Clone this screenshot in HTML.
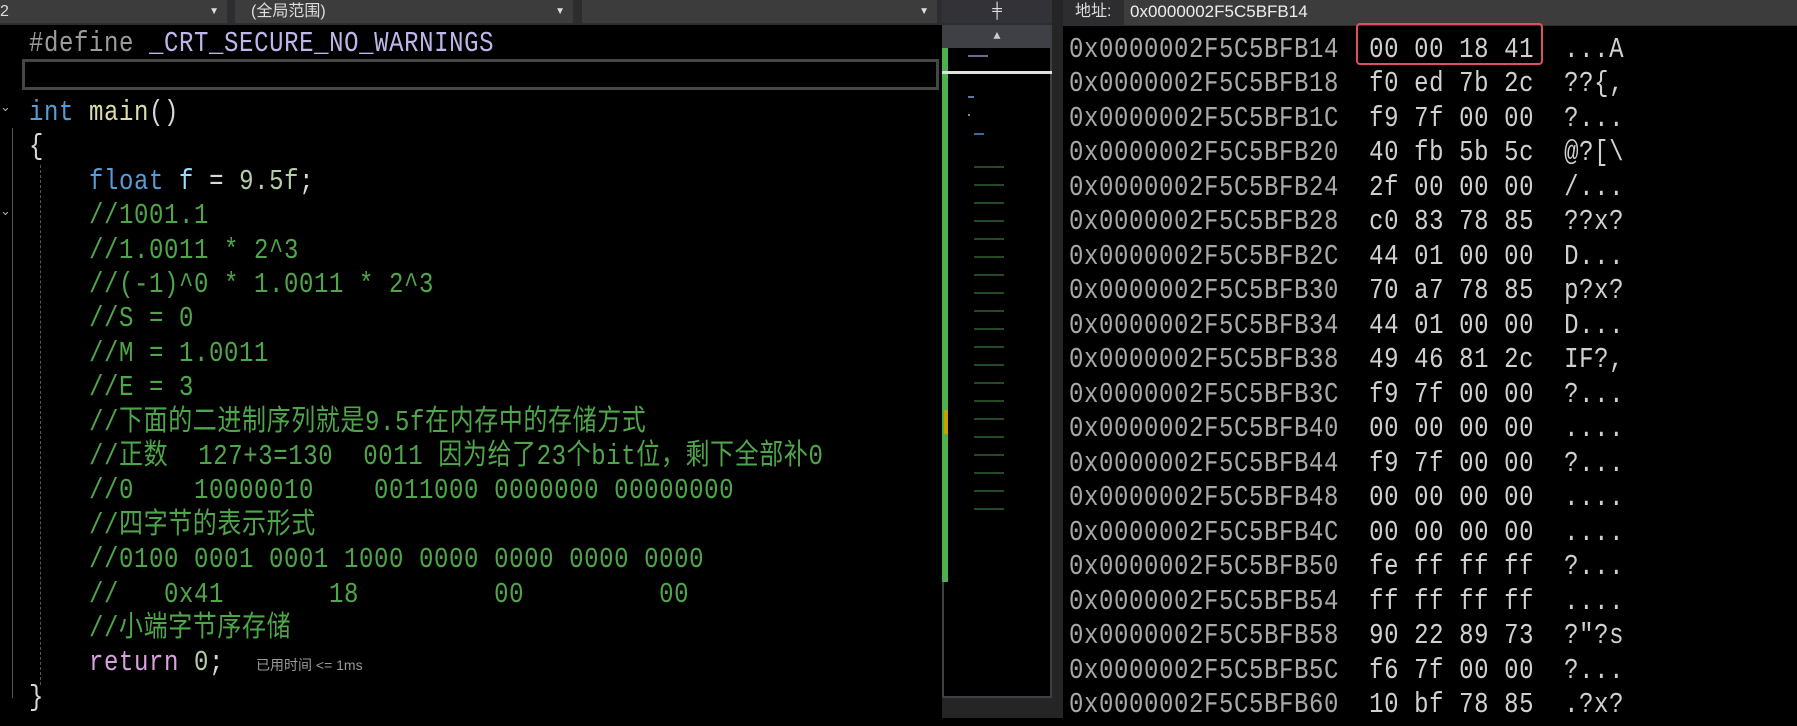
<!DOCTYPE html>
<html><head><meta charset="utf-8">
<style>
*{margin:0;padding:0;box-sizing:border-box}
body{width:1797px;height:718px;background:#000;position:relative;overflow:hidden;font-family:"Liberation Mono","Noto Sans CJK SC",monospace}
.m{font-family:"Liberation Mono","Noto Sans CJK SC",monospace;font-size:24px;letter-spacing:0.6px;white-space:pre;position:absolute;height:34px;line-height:34px;transform:scaleY(1.2);transform-origin:50% 50%;margin-top:3px}
.c{color:#4fa64a}
.k{color:#569cd6}
.p{color:#d8d8d8}
.mem{color:#d0d0d0}
.addr{color:#a8a8a8}
.bar{position:absolute;top:0;height:23px;background:#3c3c3c;color:#ddd;font-family:"Liberation Sans","Noto Sans CJK SC",sans-serif;font-size:16px;line-height:23px}
.arr{position:absolute;right:8px;top:0;font-size:10px;color:#ddd}
</style></head><body>
<div style="position:absolute;left:0;top:0;width:1063px;height:25px;background:#2d2d30"></div>
<div class="bar" style="left:0;width:227px;padding-left:0">2<span class="arr">▼</span></div>
<div class="bar" style="left:235px;width:338px;padding-left:16px">(全局范围)<span class="arr">▼</span></div>
<div class="bar" style="left:582px;width:355px"><span class="arr">▼</span></div>
<div style="position:absolute;left:942px;top:0;width:110px;height:23px;background:#333337;color:#ddd;text-align:center;font-size:16px;line-height:22px">╪</div>
<div style="position:absolute;left:942px;top:25px;width:110px;height:23px;background:#3f3f46;color:#ccc;text-align:center;font-size:12px;line-height:23px">▲</div>
<div style="position:absolute;left:942px;top:48px;width:110px;height:650px;border:2px solid #3f3f46;border-top:none;background:#000"></div>
<div style="position:absolute;left:942px;top:48px;width:6px;height:534px;background:#4fae4f"></div>
<div style="position:absolute;left:942px;top:71px;width:110px;height:3px;background:#e0e0e0"></div>
<div style="position:absolute;left:942px;top:698px;width:110px;height:20px;background:#252526"></div>
<div style="position:absolute;left:944px;top:410px;width:4px;height:24px;background:#c8a000"></div>
<div style="position:absolute;left:1052px;top:0;width:11px;height:718px;background:#252526"></div>
<div style="position:absolute;left:968px;top:55px;width:20px;height:2px;background:#6a6a90"></div>
<div style="position:absolute;left:968px;top:96px;width:6px;height:2px;background:#5a7aa0"></div>
<div style="position:absolute;left:968px;top:114px;width:2px;height:2px;background:#888"></div>
<div style="position:absolute;left:974px;top:133px;width:10px;height:2px;background:#3a6a9a"></div>
<div style="position:absolute;left:974px;top:150px;width:30px;height:360px;background:repeating-linear-gradient(#000 0,#000 16px,#244a24 16px,#244a24 18px)"></div>

<div style="position:absolute;left:22px;top:59px;width:917px;height:31px;border:3px solid #464646"></div>
<div style="position:absolute;left:12px;top:128px;width:1px;height:570px;background:#555"></div>
<div style="position:absolute;left:40px;top:165px;width:0;height:520px;border-left:1px dashed #555"></div>
<div style="position:absolute;left:0;top:100px;width:12px;height:20px;color:#aaa;font-size:13px">⌄</div>
<div style="position:absolute;left:0;top:204px;width:12px;height:20px;color:#aaa;font-size:13px">⌄</div>

<div class="m" style="left:29px;top:25px"><span style="color:#9b9b9b">#define</span> <span style="color:#bdb6e8">_CRT_SECURE_NO_WARNINGS</span></div>
<div class="m" style="left:29px;top:94px"><span class="k">int</span> <span style="color:#dcdcaa">main</span><span class="p">()</span></div>
<div class="m p" style="left:29px;top:128px">{</div>
<div class="m" style="left:89px;top:163px"><span class="k">float</span> <span style="color:#9cdcfe">f</span> <span class="p">=</span> <span style="color:#b5cea8">9.5f</span><span class="p">;</span></div>
<div class="m c" style="left:89px;top:197px">//1001.1</div>
<div class="m c" style="left:89px;top:232px">//1.0011 * 2^3</div>
<div class="m c" style="left:89px;top:266px">//(-1)^0 * 1.0011 * 2^3</div>
<div class="m c" style="left:89px;top:300px">//S = 0</div>
<div class="m c" style="left:89px;top:335px">//M = 1.0011</div>
<div class="m c" style="left:89px;top:369px">//E = 3</div>
<div class="m c" style="left:89px;top:404px">//下面的二进制序列就是9.5f在内存中的存储方式</div>
<div class="m c" style="left:89px;top:438px">//正数  127+3=130  0011 因为给了23个bit位，剩下全部补0</div>
<div class="m c" style="left:89px;top:472px">//0    10000010    0011000 0000000 00000000</div>
<div class="m c" style="left:89px;top:507px">//四字节的表示形式</div>
<div class="m c" style="left:89px;top:541px">//0100 0001 0001 1000 0000 0000 0000 0000</div>
<div class="m c" style="left:89px;top:576px">//   0x41       18         00         00</div>
<div class="m c" style="left:89px;top:610px">//小端字节序存储</div>
<div class="m" style="left:89px;top:644px"><span style="color:#d8a0df">return</span> <span style="color:#b5cea8">0</span><span class="p">;</span></div>
<div style="position:absolute;left:256px;top:657px;color:#9a9a9a;font-family:'Liberation Sans','Noto Sans CJK SC',sans-serif;font-size:14px;line-height:16px">已用时间 &lt;= 1ms</div>
<div class="m p" style="left:29px;top:679px">}</div>

<div style="position:absolute;left:1063px;top:0;width:734px;height:26px;background:#2d2d30"></div>
<div style="position:absolute;left:1075px;top:0;height:26px;line-height:24px;color:#ddd;font-family:'Liberation Sans','Noto Sans CJK SC',sans-serif;font-size:16px">地址:</div>
<div style="position:absolute;left:1124px;top:0;width:673px;height:25px;background:#3c3c3c;color:#eee;font-family:'Liberation Sans',sans-serif;font-size:17px;line-height:24px;padding-left:6px">0x0000002F5C5BFB14</div>
<div style="position:absolute;left:1356px;top:23px;width:187px;height:42px;border:2px solid #e0505a;border-radius:4px"></div>

<div class="m" style="left:1069px;top:31px"><span class="addr">0x0000002F5C5BFB14</span>  <span class="mem">00 00 18 41  ...A</span></div>
<div class="m" style="left:1069px;top:65px"><span class="addr">0x0000002F5C5BFB18</span>  <span class="mem">f0 ed 7b 2c  ??{,</span></div>
<div class="m" style="left:1069px;top:100px"><span class="addr">0x0000002F5C5BFB1C</span>  <span class="mem">f9 7f 00 00  ?...</span></div>
<div class="m" style="left:1069px;top:134px"><span class="addr">0x0000002F5C5BFB20</span>  <span class="mem">40 fb 5b 5c  @?[\</span></div>
<div class="m" style="left:1069px;top:169px"><span class="addr">0x0000002F5C5BFB24</span>  <span class="mem">2f 00 00 00  /...</span></div>
<div class="m" style="left:1069px;top:203px"><span class="addr">0x0000002F5C5BFB28</span>  <span class="mem">c0 83 78 85  ??x?</span></div>
<div class="m" style="left:1069px;top:238px"><span class="addr">0x0000002F5C5BFB2C</span>  <span class="mem">44 01 00 00  D...</span></div>
<div class="m" style="left:1069px;top:272px"><span class="addr">0x0000002F5C5BFB30</span>  <span class="mem">70 a7 78 85  p?x?</span></div>
<div class="m" style="left:1069px;top:307px"><span class="addr">0x0000002F5C5BFB34</span>  <span class="mem">44 01 00 00  D...</span></div>
<div class="m" style="left:1069px;top:341px"><span class="addr">0x0000002F5C5BFB38</span>  <span class="mem">49 46 81 2c  IF?,</span></div>
<div class="m" style="left:1069px;top:376px"><span class="addr">0x0000002F5C5BFB3C</span>  <span class="mem">f9 7f 00 00  ?...</span></div>
<div class="m" style="left:1069px;top:410px"><span class="addr">0x0000002F5C5BFB40</span>  <span class="mem">00 00 00 00  ....</span></div>
<div class="m" style="left:1069px;top:445px"><span class="addr">0x0000002F5C5BFB44</span>  <span class="mem">f9 7f 00 00  ?...</span></div>
<div class="m" style="left:1069px;top:479px"><span class="addr">0x0000002F5C5BFB48</span>  <span class="mem">00 00 00 00  ....</span></div>
<div class="m" style="left:1069px;top:514px"><span class="addr">0x0000002F5C5BFB4C</span>  <span class="mem">00 00 00 00  ....</span></div>
<div class="m" style="left:1069px;top:548px"><span class="addr">0x0000002F5C5BFB50</span>  <span class="mem">fe ff ff ff  ?...</span></div>
<div class="m" style="left:1069px;top:583px"><span class="addr">0x0000002F5C5BFB54</span>  <span class="mem">ff ff ff ff  ....</span></div>
<div class="m" style="left:1069px;top:617px"><span class="addr">0x0000002F5C5BFB58</span>  <span class="mem">90 22 89 73  ?"?s</span></div>
<div class="m" style="left:1069px;top:652px"><span class="addr">0x0000002F5C5BFB5C</span>  <span class="mem">f6 7f 00 00  ?...</span></div>
<div class="m" style="left:1069px;top:686px"><span class="addr">0x0000002F5C5BFB60</span>  <span class="mem">10 bf 78 85  .?x?</span></div>
</body></html>
